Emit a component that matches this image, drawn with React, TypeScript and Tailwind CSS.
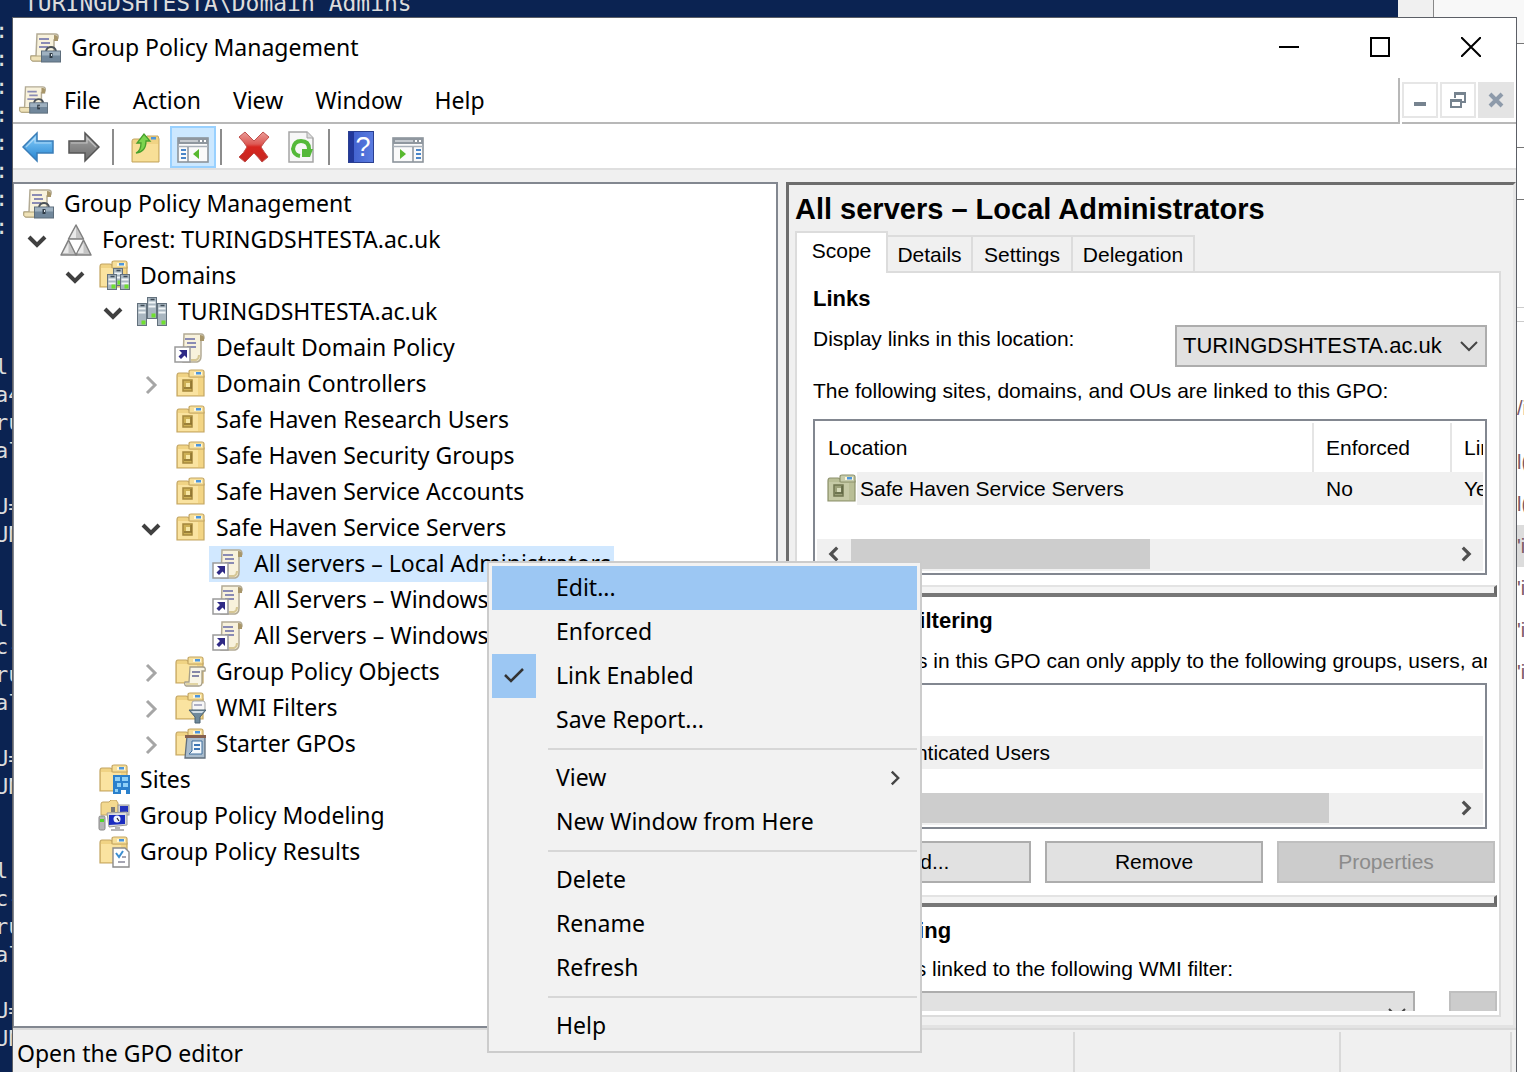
import React from "react";
import type { ReactNode } from "react";

const UI = "font-['Noto_Sans',sans-serif]";
const SANS = "font-['Liberation_Sans',sans-serif]";

/* ---------- icons ---------- */

function ScrollShape() {
  return (
    <g>
      <path d="M8 2h18q4 0 3 4l-1 2h-3v15q0 5-4 6H4q-3-1-2-5h5z" fill="#f8f2dc" stroke="#b3ab95" strokeWidth="1.500" />
      <path d="M25 3q4 0 4 3v3h-4z" fill="#a8966a" />
      <path d="M2 24h12v5H4q-3 0-2-5z" fill="#efe2b8" stroke="#b3a57c" strokeWidth="1" />
      <path d="M10 7h10M12 11h9M10 15h9" stroke="#8a8bb4" strokeWidth="1.800" />
    </g>
  );
}

function ConsoleIcon({ className = "size-8" }: { className?: string }) {
  return (
    <svg viewBox="0 0 32 32" className={className} aria-hidden="true">
      <ScrollShape />
      <path d="M17 19q1-4 5-4t5 4" fill="none" stroke="#4a5158" strokeWidth="2" />
      <rect x="12.500" y="19" width="19" height="11" fill="#71879b" stroke="#5d6d7b" />
      <path d="M13 19.500h18v4H13z" fill="#9fb1c0" />
      <path d="M20.500 21h3v5h-3z" fill="#2f3b46" />
      <path d="M22 22h1v2h-1z" fill="#dfe7ee" />
    </svg>
  );
}

function GpoLinkIcon() {
  return (
    <svg viewBox="0 0 32 32" className="size-8" aria-hidden="true">
      <path d="M10 2h17q3 0 3 4l-1 2h-2v16q0 5-4 6H9z" fill="#f8f2dc" stroke="#b3ab95" strokeWidth="1.500" />
      <path d="M26 3q4 0 4 3v3h-4z" fill="#a8966a" />
      <path d="M17 28h5q3-1 3-5" fill="none" stroke="#d6c795" strokeWidth="2" />
      <path d="M11 7h10M13 11h9M13 15h9" stroke="#8a8bb4" strokeWidth="1.800" />
      <rect x="1" y="15" width="15" height="15" fill="#fff" stroke="#9a9a9a" strokeWidth="1.500" />
      <path d="M5 18h8v8l-2.500-2.500L7 27l-2.500-2.500L8 21z" fill="#2f2a86" />
    </svg>
  );
}

function FolderShape({ muted = false }: { muted?: boolean }) {
  return (
    <g stroke={muted ? "#8d926c" : "#c4a662"} strokeWidth="1.200">
      <path d="M3 7q0-3 2-3h8q2 0 3 3h14v20H3z" fill={muted ? "#b9be96" : "#f0d384"} />
      <path d="M15 8V3q0-2 2-2h11q2 0 2 2v5z" fill={muted ? "#c7ccab" : "#f6df9a"} />
      <rect x="20" y="3" width="8" height="3" fill="#fdf6dc" stroke="none" />
      <rect x="22" y="3" width="5" height="2.500" fill="#4d96dc" stroke="none" />
      <path d="M4 8h9q2 0 3 1h13v17H4z" fill={muted ? "#c6caa6" : "#fae3a0"} stroke="none" />
      <path d="M24 9h5v17h-5z" fill={muted ? "#b9be96" : "#f3d585"} stroke="none" />
    </g>
  );
}

function OuIcon({ muted = false }: { muted?: boolean }) {
  return (
    <svg viewBox="0 0 32 32" className="size-8 shrink-0" aria-hidden="true">
      <g transform="translate(0 1)">
        <FolderShape muted={muted} />
        <path d="M9 11h9v11H9z" fill={muted ? "#9ba078" : "#cdb055"} stroke={muted ? "#70754f" : "#a5883c"} strokeWidth="1.500" />
        <path d="M12 14h4v4h-4z" fill={muted ? "#d6dab9" : "#f7e7a4"} />
        <path d="M10 19h8M17 12v7" stroke={muted ? "#5f6542" : "#8c7130"} strokeWidth="1.500" />
      </g>
    </svg>
  );
}

function Server({ x, y, h }: { x: number; y: number; h: number }) {
  return (
    <g>
      <rect x={x} y={y} width="9" height={h} fill="#a9b6c0" stroke="#63717d" strokeWidth="1" />
      <path d={`M${x + 3} ${y + 2}h4`} stroke="#3f4c58" strokeWidth="1.500" />
      <path d={`M${x + 1} ${y + 5}h7M${x + 1} ${y + 9}h7`} stroke="#f0f4f6" strokeWidth="2" />
      <rect x={x + 4} y={y + h - 5} width="4" height="4" fill="#6fe02e" />
    </g>
  );
}

function DomainIcon() {
  return (
    <svg viewBox="0 0 32 32" className="size-8" aria-hidden="true">
      <Server x={11.5} y={1.5} h={21} />
      <Server x={1.5} y={7.5} h={22} />
      <Server x={21.5} y={7.5} h={22} />
    </svg>
  );
}

function FolderWith({ children }: { children: ReactNode }) {
  return (
    <svg viewBox="0 0 32 32" className="size-8" aria-hidden="true">
      <g transform="translate(-1 0)">
        <FolderShape />
      </g>
      {children}
    </svg>
  );
}

function ForestIcon() {
  return (
    <svg viewBox="0 0 32 32" className="size-8" aria-hidden="true">
      <g stroke="#808080" strokeWidth="1.500" fill="#c4c4c4" strokeLinejoin="round">
        <path d="M16 1l7.500 14h-15z" />
        <path d="M8.500 16L16 31H1z" />
        <path d="M23.500 16L31 31H16z" />
      </g>
      <path d="M16 3v11h-6zM8.500 19v10H3zM23.500 19v10h-6z" fill="#e9e9e9" />
    </svg>
  );
}

const DomainsFolderIcon = () => (
  <FolderWith>
    <Server x={15.5} y={8.5} h={17} />
    <Server x={9.5} y={14.5} h={15} />
    <Server x={22.5} y={14.5} h={15} />
  </FolderWith>
);

const ObjectsFolderIcon = () => (
  <FolderWith>
    <path d="M16 11h13q3 0 2 4h-3v11q0 4-3 4H12q-2-1-1-4h4z" fill="#f9f5e6" stroke="#a69f89" strokeWidth="1.300" />
    <path d="M18 16h8M18 20h7" stroke="#8687a8" strokeWidth="1.800" />
    <path d="M12 27h12v2H12z" fill="#e2d5a4" />
  </FolderWith>
);

const FilterFolderIcon = () => (
  <FolderWith>
    <rect x="18" y="9" width="13" height="10" rx="2" fill="#f6f6f6" stroke="#a5a5a5" />
    <path d="M20 13h8" stroke="#9697b5" strokeWidth="1.500" />
    <path d="M15 18h17l-6 7v6h-5v-6z" fill="#6f8a9c" stroke="#4d6373" />
    <path d="M17 19h13l-2 2H19z" fill="#cfdce5" />
  </FolderWith>
);

const StarterFolderIcon = () => (
  <FolderWith>
    <path d="M13 8h18v22H11z" fill="#a9bccd" stroke="#626f7c" strokeWidth="1.300" />
    <path d="M11 7h21v3H11z" fill="#86604e" />
    <path d="M18 13h10v13H15l3-3z" fill="#f3f8fc" stroke="#3f6f9e" />
    <path d="M20 17h6M20 21h6" stroke="#3c75b5" strokeWidth="2" />
  </FolderWith>
);

const SitesFolderIcon = () => (
  <FolderWith>
    <rect x="15" y="11" width="17" height="19" fill="#2a80cc" />
    <path d="M17 13h5v4h-5zM24 13h6v4h-6zM19 19h4v4h-4zM25 19h5v4h-5zM17 25h3v3h-3z" fill="#8ed0f7" />
    <path d="M23 26h5v4h-5z" fill="#fff" />
  </FolderWith>
);

const ModelingIcon = () => (
  <svg viewBox="0 0 32 32" className="size-8" aria-hidden="true">
    <path d="M3 4q0-2 2-2h6l2-2h5l2 3v12H3z" fill="#f3d98f" stroke="#c4a662" />
    <rect x="20" y="5" width="11" height="10" fill="#d5d5d5" stroke="#999" />
    <rect x="22" y="6" width="8" height="6" fill="#2433bd" />
    <rect x="13" y="7" width="4" height="5" fill="#777" />
    <path d="M9 13l20-1v13l-18 2z" fill="#dcdcdc" stroke="#999" />
    <path d="M11 15h16v9l-16 1z" fill="#1a2cc0" />
    <circle cx="19" cy="19" r="3.500" fill="#f1f4ff" />
    <path d="M19 18l2 3" stroke="#222" strokeWidth="1.200" />
    <path d="M17 27h5v2h4v2H13v-2h4z" fill="#b5b5b5" />
    <rect x="1" y="16" width="6" height="14" rx="1.500" fill="#b5b5b5" stroke="#888" />
    <rect x="2" y="19" width="4" height="3" fill="#52d72c" />
  </svg>
);

const ResultsFolderIcon = () => (
  <FolderWith>
    <path d="M15 12h12l4 4v15H15z" fill="#fff" stroke="#8b8b8b" strokeWidth="1.400" />
    <path d="M18 17l3 4 4-6" fill="none" stroke="#3c8ed0" strokeWidth="2" />
    <path d="M24 21h4M20 26h7" stroke="#889" strokeWidth="1.400" />
  </FolderWith>
);

function Arrow({ back = false }: { back?: boolean }) {
  return (
    <svg viewBox="0 0 32 32" className="size-8" aria-hidden="true">
      <defs>
        <linearGradient id={back ? "gb" : "gf"} x1="0" y1="0" x2="0" y2="1">
          <stop offset="0" stopColor={back ? "#8ed4ff" : "#a5a5a5"} />
          <stop offset="1" stopColor={back ? "#2382cf" : "#6b6b6b"} />
        </linearGradient>
      </defs>
      <path
        d={back ? "M1 16L15 2v8h16v12H15v8z" : "M31 16L17 2v8H1v12h16v8z"}
        fill={back ? "url(#gb)" : "url(#gf)"}
        stroke={back ? "#3a7db8" : "#555"}
        strokeWidth="1.500"
      />
      <path d={back ? "M4 16l9-9v5h16" : "M3 12h16V7l9 9"} fill="none" stroke="#fff" strokeWidth="1.200" opacity="0.450" />
    </svg>
  );
}

const UpFolderIcon = () => (
  <svg viewBox="0 0 32 32" className="size-8" aria-hidden="true">
    <path d="M2 10q0-2 2-2h10l3-3h11l1 3v23H2z" fill="#f0d384" stroke="#c4a662" />
    <path d="M3 13h25v17H3z" fill="#f8df97" />
    <rect x="21" y="6" width="5" height="2.500" fill="#4d96dc" />
    <path d="M6 22q5-2 5-10H7l7-9 6 7h-4q0 11-10 12z" fill="#7bd44f" stroke="#47a02c" strokeWidth="1.300" />
  </svg>
);

function PaneIcon({ right = false }: { right?: boolean }) {
  return (
    <svg viewBox="0 0 32 26" className="h-[26px] w-8" aria-hidden="true">
      <rect x="1" y="1" width="30" height="24" fill="#fafafa" stroke="#8c949c" strokeWidth="1.600" />
      <path d="M1 1h30v6H1z" fill="#8f979f" />
      <path d="M3 4h18" stroke="#d9dde1" strokeWidth="1.500" />
      <path d="M23 4h2M27 4h2" stroke="#fff" strokeWidth="1.800" />
      <path d="M1 9.500h30" stroke="#a8b0b9" strokeWidth="1.500" />
      {right ? (
        <g>
          <path d="M21 10v15" stroke="#8c949c" strokeWidth="1.500" />
          <path d="M24 13h5M24 17h5M24 21h5" stroke="#4b86c8" strokeWidth="1.800" />
          <path d="M8 12l6 5-6 5z" fill="#57b82e" />
        </g>
      ) : (
        <g>
          <path d="M11 10v15" stroke="#8c949c" strokeWidth="1.500" />
          <path d="M4 13h5M4 17h5M4 21h5" stroke="#4b86c8" strokeWidth="1.800" />
          <path d="M22 12l-6 5 6 5z" fill="#57b82e" />
        </g>
      )}
    </svg>
  );
}

const DeleteIcon = () => (
  <svg viewBox="0 0 32 32" className="size-8" aria-hidden="true">
    <defs>
      <linearGradient id="gx" x1="0" y1="0" x2="0" y2="1">
        <stop offset="0" stopColor="#ea9c98" />
        <stop offset="0.400" stopColor="#dd5a55" />
        <stop offset="0.500" stopColor="#d8261f" />
        <stop offset="1" stopColor="#c42822" />
      </linearGradient>
    </defs>
    <path d="M1 6l6-5 9 9 9-9 6 5q-5 5-8 10 3 5 7 10l-6 5q-4-5-8-9-4 4-9 9l-6-5q5-4 8-10-3-5-8-10z" fill="url(#gx)" stroke="#c0504c" strokeLinejoin="round" />
  </svg>
);

const RefreshIcon = () => (
  <svg viewBox="0 0 26 32" className="h-8 w-[26px]" aria-hidden="true">
    <path d="M1 1h18l6 6v24H1z" fill="#f7f7f7" stroke="#a5a5a5" strokeWidth="1.500" />
    <path d="M19 1v6h6" fill="#ddd" stroke="#a5a5a5" />
    <path d="M12 25q-6-1-7-7 1-8 8-8 8 0 8 8" fill="none" stroke="#55b93a" strokeWidth="4" />
    <path d="M14 18h11l-3 8h-8z" fill="#55b93a" />
  </svg>
);

const HelpIcon = () => (
  <span className="flex h-8 w-[26px] items-center justify-center border border-[#2a3f91] bg-linear-to-r from-[#22389a] from-20% via-[#4464d0] via-20% to-[#5a7be0]">
    <span className="pl-1 font-['Liberation_Sans',sans-serif] text-[27px] leading-8 text-white">?</span>
  </span>
);

function Chevron({ dir, className }: { dir: "down" | "right" | "left"; className: string }) {
  const d = { down: "M2 6l8 8 8-8", right: "M6 2l8 8-8 8", left: "M14 2l-8 8 8 8" }[dir];
  return (
    <svg viewBox="0 0 20 20" className={className} fill="none" stroke="currentColor" aria-hidden="true">
      <path d={d} />
    </svg>
  );
}

/* ---------- background windows ---------- */

const CONSOLE_LINES = [
  ":", ":", ":", ":", ":", ":", ":", ":", "", "", "", "", "l:", "a4", "ru", "al", "", "U=", "UN", "", "",
  "l:", "c-", "ru", "al", "", "U=", "UN", "", "", "l:", "c-", "ru", "al", "", "U=", "UN",
];

function ConsoleStrip() {
  return (
    <div className="w-3 shrink-0 overflow-hidden bg-[#0b2352]">
      <pre className="-ml-[5px] font-['DejaVu_Sans_Mono',monospace] text-[22px] leading-[28px] text-[#dcdcdc]">
        {CONSOLE_LINES.join("\n")}
      </pre>
    </div>
  );
}

const DOCUMENT_LINES = ["/i", "l(", "l(", "'i", "'i", "'i", "'i"];
const DOCUMENT_LINE_STYLE = ["mb-3", "", "", "bg-[#dcdcdc]", "", "", ""];

function DocumentStrip() {
  return (
    <div className={`flex w-[7px] shrink-0 flex-col overflow-hidden bg-white text-[20px] leading-[42px] text-[#7b5a66] ${SANS}`}>
      <div className="h-[27px] border-b border-[#777] bg-[#f8f8f8]" />
      <div className="h-[104px] border-b border-[#777]" />
      <div className="h-[52px] border-b border-[#777]" />
      <div className="h-[108px] border-b border-[#ccc]" />
      <div className="mb-[65px] h-[14px] border-b border-[#ccc]" />
      {DOCUMENT_LINES.map((line, i) => (
        <div key={i} className={`h-[42px] ${DOCUMENT_LINE_STYLE[i]}`}>{line}</div>
      ))}
    </div>
  );
}

/* ---------- window chrome ---------- */

function TitleBar() {
  const btn = "flex w-[91px] items-center justify-center pb-0.5";
  return (
    <header className="flex h-[60px] items-stretch pl-4">
      <div className="flex flex-1 items-center gap-2.5">
        <ConsoleIcon />
        <h1 className="pb-0.5 text-[23px]">Group Policy Management</h1>
      </div>
      <button className={btn} aria-label="Minimize">
        <svg viewBox="0 0 20 20" className="size-5"><path d="M0 10h20" stroke="#000" strokeWidth="2" /></svg>
      </button>
      <button className={btn} aria-label="Maximize">
        <svg viewBox="0 0 20 20" className="size-5"><rect x="1" y="1" width="18" height="18" fill="none" stroke="#000" strokeWidth="2" /></svg>
      </button>
      <button className={btn} aria-label="Close">
        <svg viewBox="0 0 20 20" className="size-5"><path d="M0 0l20 20M20 0L0 20" stroke="#000" strokeWidth="2" /></svg>
      </button>
    </header>
  );
}

function MenuBar() {
  const mdi = "flex size-9 items-center justify-center border-2 border-[#e6e6e6]";
  return (
    <div className="flex h-[46px]">
      <nav className="flex flex-1 items-center border-r-2 border-b-2 border-[#b8b8b8] pl-[5px]">
        <ConsoleIcon className="size-[30px]" />
        {["File", "Action", "View", "Window", "Help"].map((m) => (
          <button key={m} className="px-4 text-[23px] leading-8">{m}</button>
        ))}
      </nav>
      <div className="ml-0.5 flex items-center gap-0.5 border-b-2 border-[#b8b8b8] pr-0.5">
        <button className={mdi} aria-label="Minimize child window">
          <svg viewBox="0 0 16 16" className="size-4"><path d="M2 12h12" stroke="#76838f" strokeWidth="4" /></svg>
        </button>
        <button className={mdi} aria-label="Restore child window">
          <svg viewBox="0 0 16 16" className="size-4" fill="none" stroke="#76838f" strokeWidth="2">
            <path d="M1 8h10v7H1zM1 9h10M5 6V1h10v9h-3M5 2h10" />
          </svg>
        </button>
        <button className="flex size-9 items-center justify-center bg-[#e4e4e4]" aria-label="Close child window">
          <svg viewBox="0 0 16 16" className="size-4"><path d="M2 2l12 12M14 2L2 14" stroke="#8d9aaa" strokeWidth="4" /></svg>
        </button>
      </div>
    </div>
  );
}

const ToolSeparator = ({ className }: { className: string }) => <div className={`h-9 w-0.5 bg-[#8c8c8c] ${className}`} />;

function Toolbar() {
  return (
    <div className="flex h-[46px] items-center border-b-2 border-[#dfdfdf] pt-0.5 pl-[9px]" role="toolbar">
      <button aria-label="Back"><Arrow back /></button>
      <button aria-label="Forward" className="ml-3.5"><Arrow /></button>
      <ToolSeparator className="ml-3" />
      <button aria-label="Up one level" className="ml-4"><UpFolderIcon /></button>
      <button aria-label="Show or hide console tree" aria-pressed="true" className="ml-2 flex h-[42px] w-[46px] items-center justify-center border-2 border-[#99d1ff] bg-[#cce8ff] pt-1.5">
        <PaneIcon />
      </button>
      <ToolSeparator className="ml-1" />
      <button aria-label="Delete" className="ml-4"><DeleteIcon /></button>
      <button aria-label="Refresh" className="ml-[18px]"><RefreshIcon /></button>
      <ToolSeparator className="ml-3.5" />
      <button aria-label="Help" className="ml-[18px]"><HelpIcon /></button>
      <button aria-label="Show or hide action pane" className="ml-[18px] pt-1.5"><PaneIcon right /></button>
    </div>
  );
}

/* ---------- console tree ---------- */

type Node = { level: number; label: string; icon: ReactNode; open?: boolean; selected?: boolean };

const NODES: Node[] = [
  { level: 0, label: "Group Policy Management", icon: <ConsoleIcon /> },
  { level: 1, label: "Forest: TURINGDSHTESTA.ac.uk", icon: <ForestIcon />, open: true },
  { level: 2, label: "Domains", icon: <DomainsFolderIcon />, open: true },
  { level: 3, label: "TURINGDSHTESTA.ac.uk", icon: <DomainIcon />, open: true },
  { level: 4, label: "Default Domain Policy", icon: <GpoLinkIcon /> },
  { level: 4, label: "Domain Controllers", icon: <OuIcon />, open: false },
  { level: 4, label: "Safe Haven Research Users", icon: <OuIcon /> },
  { level: 4, label: "Safe Haven Security Groups", icon: <OuIcon /> },
  { level: 4, label: "Safe Haven Service Accounts", icon: <OuIcon /> },
  { level: 4, label: "Safe Haven Service Servers", icon: <OuIcon />, open: true },
  { level: 5, label: "All servers – Local Administrators", icon: <GpoLinkIcon />, selected: true },
  { level: 5, label: "All Servers – Windows", icon: <GpoLinkIcon /> },
  { level: 5, label: "All Servers – Windows", icon: <GpoLinkIcon /> },
  { level: 4, label: "Group Policy Objects", icon: <ObjectsFolderIcon />, open: false },
  { level: 4, label: "WMI Filters", icon: <FilterFolderIcon />, open: false },
  { level: 4, label: "Starter GPOs", icon: <StarterFolderIcon />, open: false },
  { level: 2, label: "Sites", icon: <SitesFolderIcon /> },
  { level: 2, label: "Group Policy Modeling", icon: <ModelingIcon /> },
  { level: 2, label: "Group Policy Results", icon: <ResultsFolderIcon /> },
];

const INDENT = ["pl-0", "pl-0", "pl-[38px]", "pl-[76px]", "pl-[114px]", "pl-[152px]"];

function ConsoleTree() {
  return (
    <ul className="w-[765px] shrink-0 border-2 border-l-1 border-[#828790] bg-white pt-0.5 pl-[5px]" role="tree">
      {NODES.map((n, i) => (
        <li key={i} role="treeitem" aria-selected={!!n.selected} className={`flex h-9 items-center ${INDENT[n.level]}`}>
          {n.level > 0 && (
            <span className="w-[38px] shrink-0 pt-0.5 pl-2">
              {n.open !== undefined && (
                <Chevron
                  dir={n.open ? "down" : "right"}
                  className={n.open ? "size-5 stroke-4 text-[#404040]" : "size-5 stroke-3 text-[#a6a6a6]"}
                />
              )}
            </span>
          )}
          <button className={`flex h-9 items-center gap-2.5 px-[3px] text-[23px] whitespace-nowrap ${n.selected ? "bg-[#d1e8ff]" : ""}`}>
            {n.icon}
            <span className="pb-0.5">{n.label}</span>
          </button>
        </li>
      ))}
    </ul>
  );
}

/* ---------- details pane ---------- */

function ScrollBar({ thumb }: { thumb: string }) {
  return (
    <div className="flex h-8 items-stretch bg-[#f0f0f0] pb-0.5">
      <button aria-label="Scroll left" className="flex w-[34px] items-center justify-center">
        <Chevron dir="left" className="size-4 stroke-4 text-[#505050]" />
      </button>
      <div className="flex-1">
        <div className={`h-full bg-[#cdcdcd] ${thumb}`} />
      </div>
      <button aria-label="Scroll right" className="flex w-[34px] items-center justify-center">
        <Chevron dir="right" className="size-4 stroke-4 text-[#505050]" />
      </button>
    </div>
  );
}

function Divider() {
  return (
    <div className="mr-0.5 h-3 shrink-0 border-t-2 border-r-3 border-b-4 border-t-[#e3e3e3] border-r-[#696969] border-b-[#777] bg-[#f4f4f4]" />
  );
}

function LinksTable() {
  const head = "border-r-2 border-[#e5e5e5] text-left font-normal";
  return (
    <table className="w-full table-fixed border-collapse overflow-hidden whitespace-nowrap">
      <thead>
        <tr className="h-[49px]">
          <th className={`px-[11px] ${head}`}>Location</th>
          <th className={`w-[138px] px-3 ${head}`}>Enforced</th>
          <th className="w-8 overflow-hidden pl-3 text-left font-normal">Link Enabled</th>
        </tr>
      </thead>
      <tbody>
        <tr className="h-[33px]">
          <td className="p-0">
            <div className="flex h-[33px] items-center gap-0 pl-2">
              <OuIcon muted />
              <span className="flex-1 bg-[#f0f0f0] pl-[3px] leading-[33px]">Safe Haven Service Servers</span>
            </div>
          </td>
          <td className="bg-[#f0f0f0] px-[13px]">No</td>
          <td className="overflow-hidden bg-[#f0f0f0] pl-[13px]">Yes</td>
        </tr>
      </tbody>
    </table>
  );
}

function Tabs() {
  const tab = "h-9 border-2 border-b-0 border-l-0 border-[#dcdcdc] pt-0.5";
  return (
    <div className="flex items-end" role="tablist">
      <button role="tab" aria-selected="true" className="relative z-10 -mb-0.5 h-[42px] w-[93px] border-2 border-b-0 border-[#dcdcdc] bg-white pb-1">
        Scope
      </button>
      <button role="tab" aria-selected="false" className={`${tab} w-[85px]`}>Details</button>
      <button role="tab" aria-selected="false" className={`${tab} w-[100px]`}>Settings</button>
      <button role="tab" aria-selected="false" className={`${tab} w-[122px]`}>Delegation</button>
    </div>
  );
}

function DetailsPane() {
  const push = "h-[42px] flex-1 border-2 border-[#adadad] bg-[#e1e1e1]";
  const heading = "text-[22px] font-bold";
  return (
    <main className={`ml-2 flex min-w-0 flex-1 flex-col border-3 border-t-[#6d6d6d] border-r-[#e6e6e6] border-b-[#e3e3e3] border-l-[#6d6d6d] bg-[#f0f0f0] pr-3 pb-2 pl-1.5 text-[21px] leading-7 ${SANS}`}>
      <h2 className="pt-2 pb-1.5 text-[29px] leading-[32px] font-bold">All servers – Local Administrators</h2>
      <Tabs />
      <div className="flex min-h-0 flex-1 flex-col border-2 border-[#dcdcdc] bg-white pb-1">
        <div className="flex min-h-0 flex-1 flex-col overflow-hidden">
          <section className="pt-3 pr-3 pb-[10px] pl-4">
            <h3 className={heading}>Links</h3>
            <div className="mt-3 flex justify-between">
              <label htmlFor="location">Display links in this location:</label>
              <div className="relative">
                <select id="location" className="block h-[42px] w-[312px] appearance-none border-2 border-[#adadad] bg-[#e1e1e1] pl-1.5 text-[22px]">
                  <option>TURINGDSHTESTA.ac.uk</option>
                </select>
                <Chevron dir="down" className="pointer-events-none absolute top-[11px] right-2 size-5 stroke-2 text-[#444]" />
              </div>
            </div>
            <p className="mt-2.5">The following sites, domains, and OUs are linked to this GPO:</p>
            <div className="mt-3.5 flex h-[156px] flex-col justify-between border-2 border-[#828790] bg-white p-0.5">
              <LinksTable />
              <ScrollBar thumb="w-1/2" />
            </div>
          </section>
          <Divider />
          <section className="pt-2.5 pb-3 pl-4">
            <h3 className={heading}>Security Filtering</h3>
            <p className="mt-3 mr-3 overflow-hidden whitespace-nowrap">
              The settings in this GPO can only apply to the following groups, users, and computers:
            </p>
            <div className="mt-2 mr-3 flex h-[146px] flex-col border-2 border-[#828790] bg-white p-0.5">
              <table className="w-full border-collapse">
                <thead>
                  <tr className="h-[49px]"><th className="px-3 text-left font-normal">Name</th></tr>
                </thead>
                <tbody>
                  <tr className="h-[33px]"><td className="bg-[#f0f0f0] pl-11">Authenticated Users</td></tr>
                </tbody>
              </table>
              <div className="mt-auto"><ScrollBar thumb="w-4/5" /></div>
            </div>
            <div className="mt-3 mr-1 flex gap-3.5">
              <button className={push}>Add...</button>
              <button className={push}>Remove</button>
              <button disabled className="h-[42px] flex-1 border-2 border-[#bfbfbf] bg-[#cccccc] text-[#8b8b8b]">Properties</button>
            </div>
          </section>
          <Divider />
          <section className="pt-2.5 pr-0.5 pl-4">
            <h3 className={heading}>WMI Filtering</h3>
            <label htmlFor="wmi" className="mt-2.5 block">This GPO is linked to the following WMI filter:</label>
            <div className="mt-2 flex gap-[34px]">
              <div className="relative flex-1">
                <select id="wmi" className="block h-[42px] w-full appearance-none border-2 border-[#adadad] bg-[#e1e1e1] pl-1.5">
                  <option>&lt;none&gt;</option>
                </select>
                <Chevron dir="down" className="pointer-events-none absolute top-3 right-2 size-5 stroke-2 text-[#444]" />
              </div>
              <button disabled className="h-[42px] w-12 border-2 border-[#bfbfbf] bg-[#cccccc]" aria-label="Open filter" />
            </div>
          </section>
        </div>
      </div>
    </main>
  );
}

/* ---------- context menu ---------- */

type Entry = { label: string; active?: boolean; checked?: boolean; sub?: boolean };

const MENU: Entry[][] = [
  [{ label: "Edit...", active: true }, { label: "Enforced" }, { label: "Link Enabled", checked: true }, { label: "Save Report..." }],
  [{ label: "View", sub: true }, { label: "New Window from Here" }],
  [{ label: "Delete" }, { label: "Rename" }, { label: "Refresh" }],
  [{ label: "Help" }],
];

function ContextMenu() {
  return (
    <div role="menu" className="absolute top-[561px] left-[487px] w-[435px] border-2 border-[#cccccc] bg-[#f2f2f2] p-[3px] text-[23px]">
      {MENU.map((group, g) => (
        <React.Fragment key={g}>
          {g > 0 && (
            <div className="flex h-3.5 items-center pl-14">
              <div className="h-0.5 w-full bg-[#d7d7d7]" />
            </div>
          )}
          {group.map((e) => (
            <button key={e.label} role="menuitem" className={`flex h-11 w-full items-center text-left ${e.active ? "bg-[#9cc7f3]" : ""}`}>
              <span className={`flex size-11 items-center justify-center ${e.checked ? "bg-[#9cc7f3]" : ""}`}>
                {e.checked && (
                  <svg viewBox="0 0 20 16" className="h-4 w-5" fill="none" stroke="#333" strokeWidth="2.500" aria-hidden="true">
                    <path d="M1 7l6 6L19 1" />
                  </svg>
                )}
              </span>
              <span className="flex-1 pb-0.5 pl-5">{e.label}</span>
              {e.sub && <Chevron dir="right" className="mr-3.5 size-4 stroke-3 text-[#444]" />}
            </button>
          ))}
        </React.Fragment>
      ))}
    </div>
  );
}

function StatusBar() {
  return (
    <footer className="flex h-11 shrink-0 border-t-2 border-[#d9d9d9] pt-0.5 pr-1">
      <p className="flex-1 border-r-2 border-[#d9d9d9] pl-1 text-[23px] leading-[42px]">Open the GPO editor</p>
      <div className="w-[266px] border-r-2 border-[#d9d9d9]" />
      <div className="w-[171px] border-r-2 border-[#d9d9d9]" />
    </footer>
  );
}

export default function App() {
  return (
    <div className={`relative flex h-screen flex-col overflow-hidden bg-[#0b2352] text-black ${UI}`}>
      <div className="flex h-[17px] shrink-0 overflow-hidden">
        <p className="flex-1 pl-6 font-['DejaVu_Sans_Mono',monospace] text-[23px] leading-[6px] text-[#dcdcdc]">
          TURINGDSHTESTA\Domain Admins
        </p>
        <div className="w-[35px] bg-[#f0f0f0]" />
        <div className="w-[91px] border-l border-[#888] bg-[#f8f8f8]" />
      </div>
      <div className="flex min-h-0 flex-1">
        <ConsoleStrip />
        <div className="flex min-w-0 flex-1 flex-col border border-b-0 border-[#5c5f66] bg-[#f0f0f0]">
          <div className="bg-white">
            <TitleBar />
            <MenuBar />
            <Toolbar />
          </div>
          <div className="mt-3 flex min-h-0 flex-1">
            <ConsoleTree />
            <DetailsPane />
          </div>
          <StatusBar />
        </div>
        <DocumentStrip />
      </div>
      <ContextMenu />
    </div>
  );
}
